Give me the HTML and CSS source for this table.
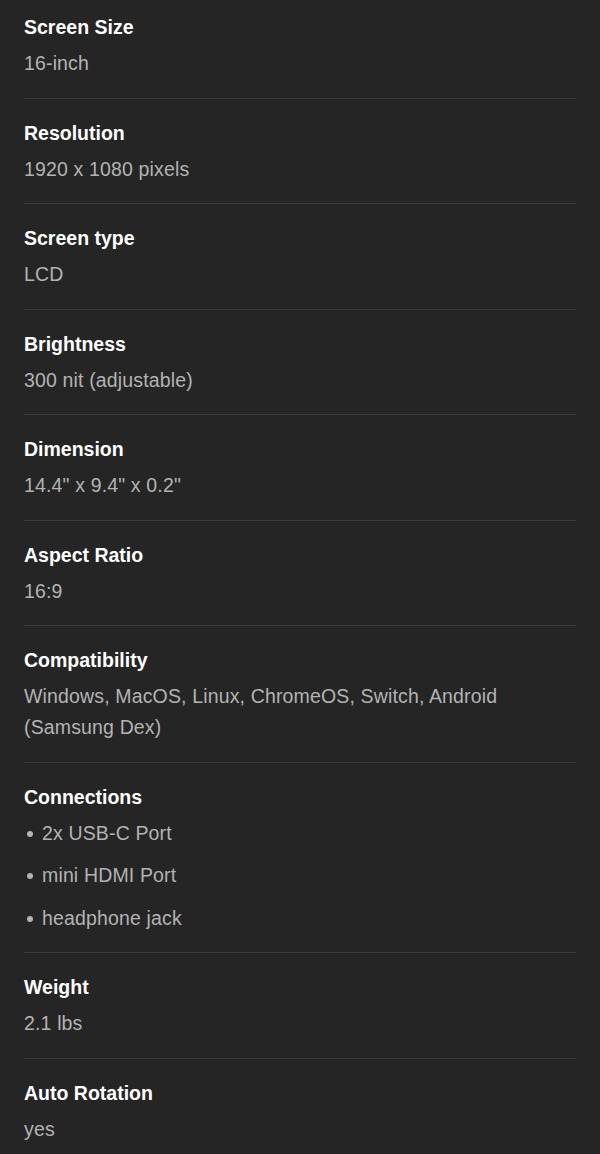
FILE: index.html
```html
<!DOCTYPE html>
<html lang="en">

<head>
    <meta charset="UTF-8">
    <meta name="viewport" content="width=device-width, initial-scale=1.0">
    <title>Specifications</title>
    <link rel="stylesheet" href="styles.css">
</head>

<body>

    <div class="specs">
        <div class="spec">
            <h4>Screen Size</h4>
            <p>16-inch</p>
        </div>
        <div class="spec">
            <h4>Resolution</h4>
            <p>1920 x 1080 pixels</p>
        </div>
        <div class="spec">
            <h4>Screen type</h4>
            <p>LCD</p>
        </div>
        <div class="spec">
            <h4>Brightness</h4>
            <p>300 nit (adjustable)</p>
        </div>
        <div class="spec">
            <h4>Dimension</h4>
            <p>14.4" x 9.4" x 0.2"</p>
        </div>
        <div class="spec">
            <h4>Aspect Ratio</h4>
            <p>16:9</p>
        </div>
        <div class="spec">
            <h4>Compatibility</h4>
            <p>Windows, MacOS, Linux, ChromeOS, Switch, Android (Samsung Dex)</p>
        </div>
        <div class="spec">
            <h4>Connections</h4>
            <ul>
                <li>2x USB-C Port</li>
                <li>mini HDMI Port</li>
                <li>headphone jack</li>
            </ul>
        </div>
        <div class="spec">
            <h4>Weight</h4>
            <p>2.1 lbs</p>
        </div>
        <div class="spec">
            <h4>Auto Rotation</h4>
            <p>yes</p>
        </div>
    </div>

</body>

</html>
```

FILE: styles.css
```css
body {
    margin: 0;
    background-color: #252525;
    font-family: "Liberation Sans", Arial, Helvetica, sans-serif;
}

.specs {
    padding: 0 24px;
}

.spec {
    padding: 22px 0 18.5px;
    border-bottom: 1px solid #3c3c3c;
}

.spec:first-child {
    padding-top: 15px;
}

.spec:last-child {
    border-bottom: none;
}

.spec h4 {
    margin: 0 0 9px;
    font-size: 19.5px;
    line-height: 24px;
    font-weight: bold;
    color: #ffffff;
}

.spec p {
    margin: 0;
    font-size: 19.5px;
    line-height: 31px;
    letter-spacing: 0.15px;
    color: #b3b3b3;
}

.spec ul {
    margin: 0;
    padding: 0;
    list-style: none;
}

.spec li {
    position: relative;
    padding-left: 18px;
    font-size: 19.5px;
    line-height: 31px;
    letter-spacing: 0.15px;
    color: #b3b3b3;
}

.spec li + li {
    margin-top: 11.5px;
}

.spec li::before {
    content: "";
    position: absolute;
    left: 3px;
    top: 13px;
    width: 6px;
    height: 6px;
    border-radius: 50%;
    background-color: #b3b3b3;
}
```
